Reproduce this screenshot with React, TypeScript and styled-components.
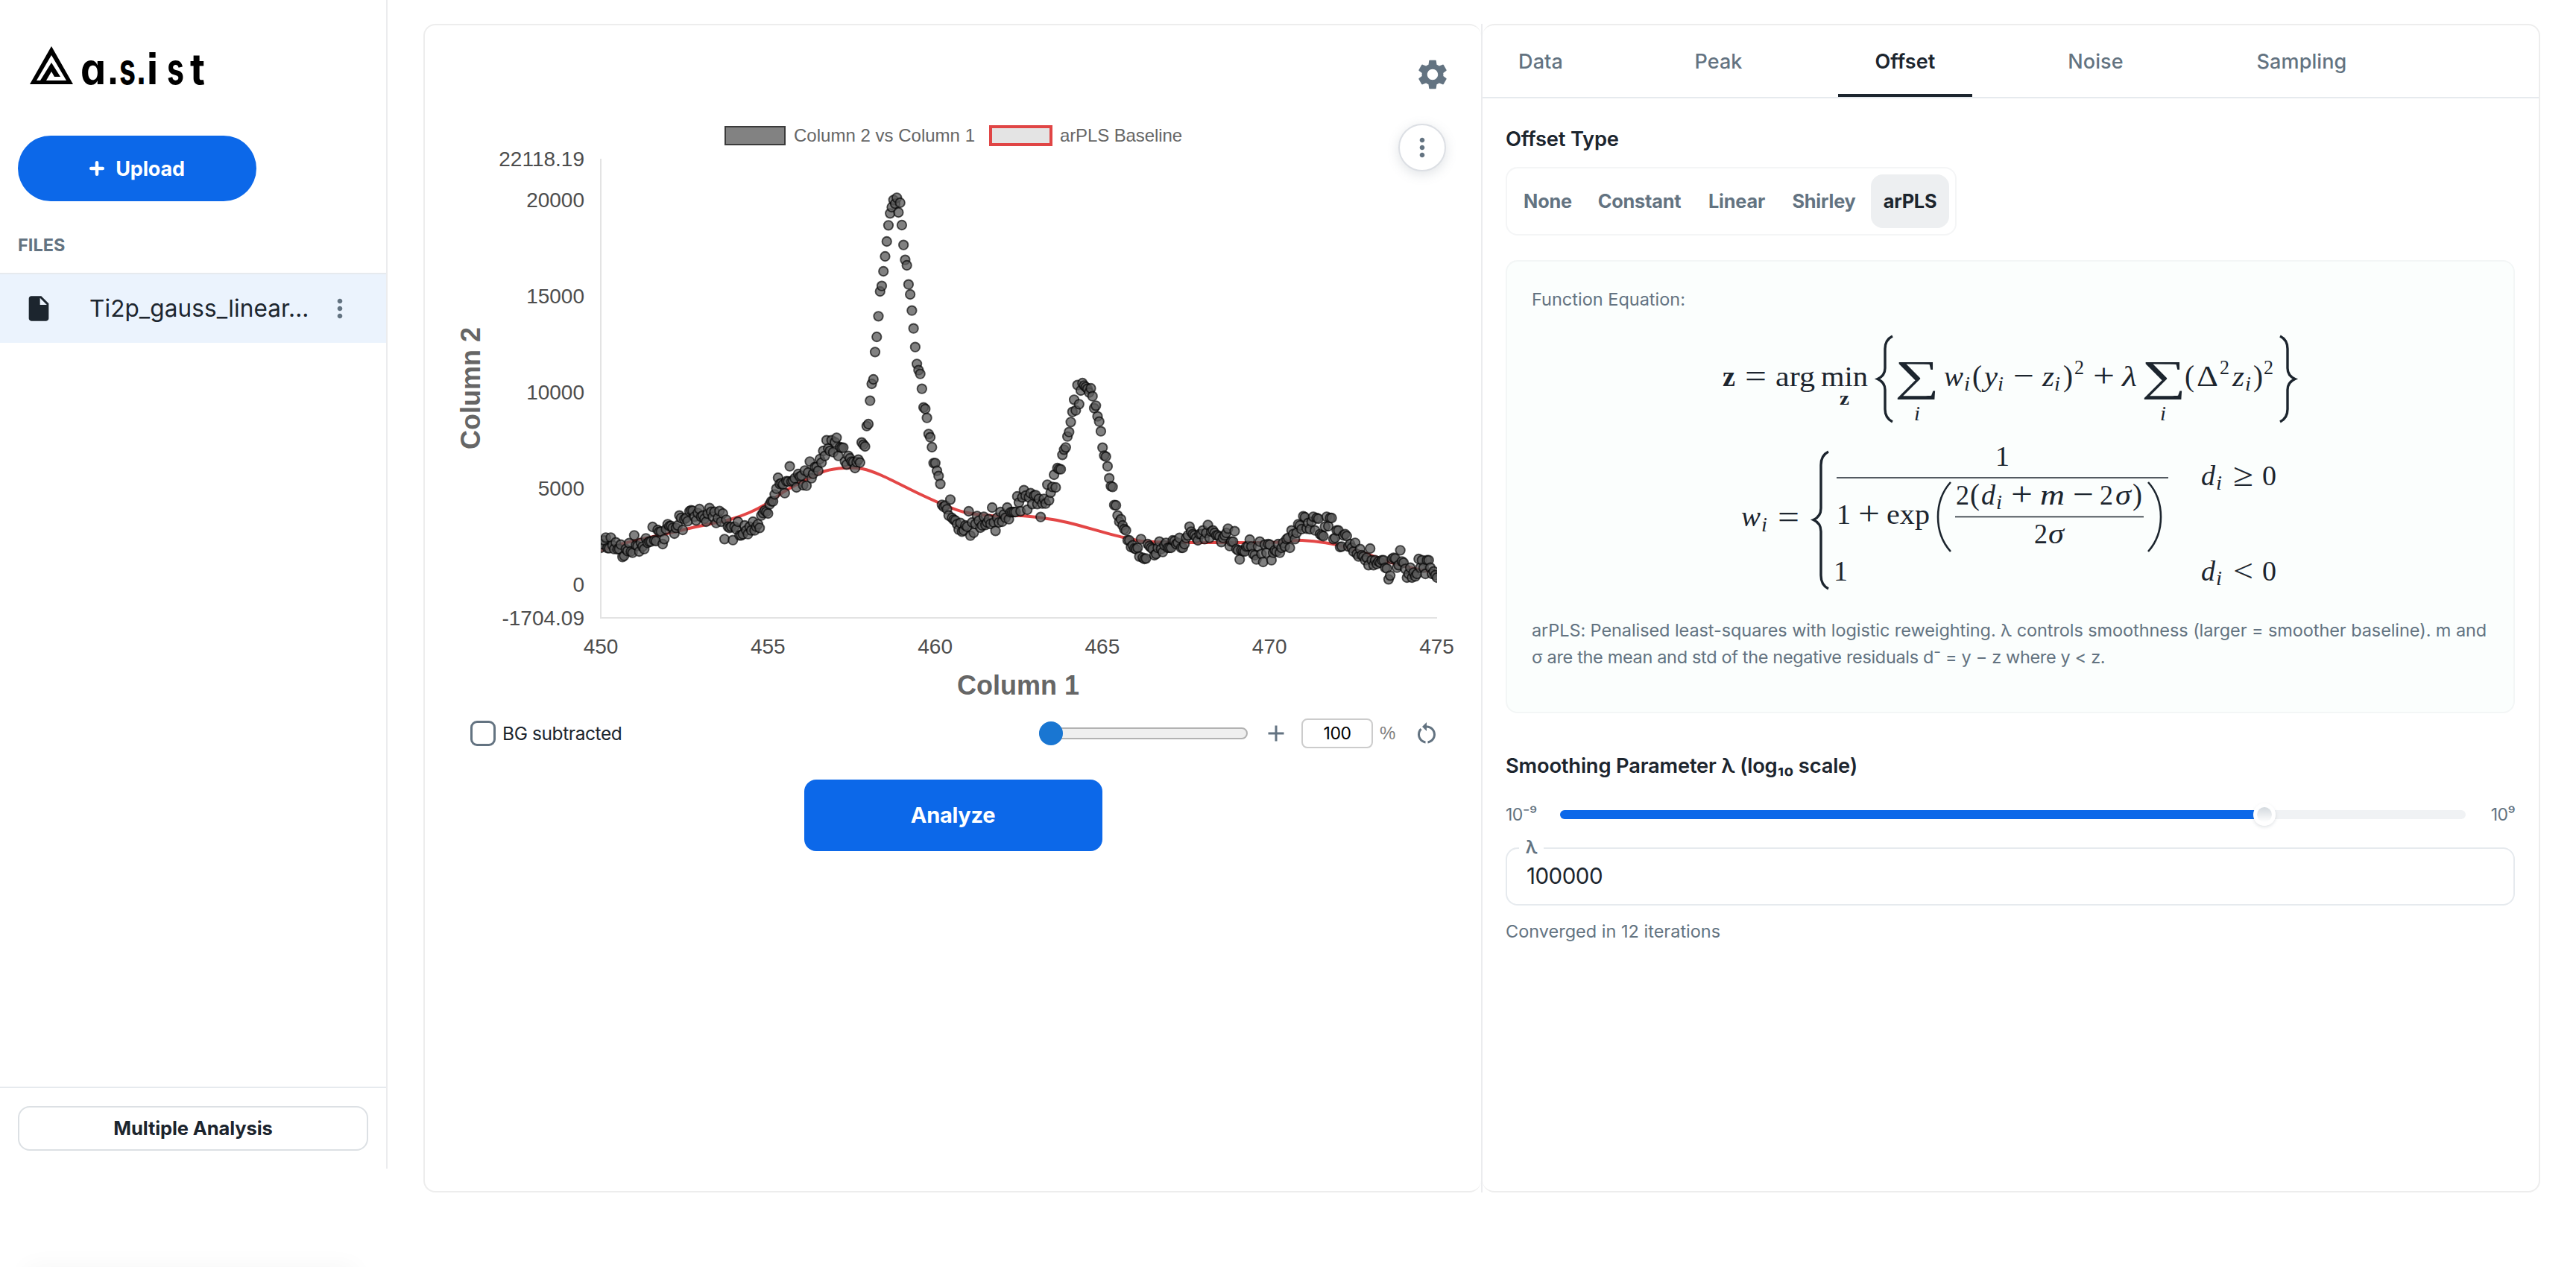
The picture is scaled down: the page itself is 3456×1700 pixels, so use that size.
import React from 'react';
import styled, { createGlobalStyle } from 'styled-components';
import { MdAdd, MdInsertDriveFile, MdMoreVert, MdRestartAlt, MdSettings } from 'react-icons/md';

const GlobalStyle = createGlobalStyle`
    * { box-sizing: border-box; }
    body {
        margin: 0;
        background: #fff;
        color: #1c252e;
        font-family: Inter, "Liberation Sans", sans-serif;
    }
    button, input { font-family: inherit; color: inherit; }
`

const Page = styled.div`
    display: flex;
    height: 1700px;
    overflow: hidden;
`
const SidebarColumn = styled.div`
    width: 520px;
    display: flex;
    flex-direction: column;
    justify-content: space-between;
`
const Sidebar = styled.aside`
    height: 1568px;
    border-right: 2px solid #ebecee;
    display: flex;
    flex-direction: column;
`
const LogoRow = styled.div`
    height: 182px;
    padding: 50px 0 0 38px;
`
const UploadButton = styled.button`
    display: flex;
    align-items: center;
    justify-content: center;
    gap: 15px;
    width: 320px;
    height: 88px;
    margin-left: 24px;
    padding: 0;
    border: none;
    border-radius: 44px;
    background: #0c68e9;
    color: #fff;
    font-size: 27px;
    font-weight: 700;
    letter-spacing: -0.2px;
`
const SidebarHeading = styled.div`
    height: 98px;
    padding: 41px 24px 0;
    border-bottom: 2px solid #e6eaee;
    color: #637381;
    font-size: 23.5px;
    font-weight: 700;
    line-height: 36px;
`
const FileRow = styled.div`
    display: flex;
    align-items: center;
    height: 92px;
    padding: 0 42px 0 32px;
    background: #ebf3fd;
`
const FileName = styled.div`
    flex: 1;
    margin-left: 48px;
    padding-bottom: 2px;
    font-size: 31.5px;
    letter-spacing: 0.1px;
    white-space: nowrap;
`
const SidebarFooter = styled.div`
    margin-top: auto;
    height: 110px;
    padding: 24px 24px 0;
    border-top: 2px solid #e6eaee;
`
const OutlineButton = styled.button`
    display: block;
    width: 100%;
    height: 60px;
    padding: 0 0 2px;
    border: 2px solid #dce0e4;
    border-radius: 16px;
    background: #fff;
    font-size: 25.5px;
    font-weight: 700;
    letter-spacing: -0.1px;
`
const HiddenCard = styled.div`
    width: 440px;
    height: 20px;
    margin: 0 0 -24px 36px;
    border-radius: 20px;
    box-shadow: 0 0 32px 4px rgba(0, 0, 0, 0.045);
`

const Main = styled.main`
    display: flex;
    width: 2840px;
    height: 1568px;
    margin: 32px 0 0 48px;
`
const Panel = styled.section<{ $side: 'left' | 'right' }>`
    flex: 1;
    min-width: 0;
    border: 2px solid #ededed;
    border-${p => (p.$side === 'left' ? 'right' : 'left')}: none;
    border-radius: 16px;
    display: flex;
    flex-direction: column;
`
const Divider = styled.div`
    width: 2px;
    background: #ebecee;
`

const PanelHeader = styled.div`
    display: flex;
    justify-content: flex-end;
    padding: 42px 41px 0 0;
    color: #637381;
`
const ChartArea = styled.div`
    position: relative;
    margin: 26px 0 0 30px;
    height: 800px;
`
const ChartMenu = styled.button`
    position: absolute;
    top: 16px;
    left: 1276px;
    display: flex;
    align-items: center;
    justify-content: center;
    width: 64px;
    height: 64px;
    padding: 0;
    border: 2px solid #dcdfe4;
    border-radius: 50%;
    background: #fff;
    color: #637381;
    box-shadow: 0 4px 16px rgba(99, 115, 129, 0.2);
`
const Controls = styled.div`
    display: flex;
    align-items: center;
    height: 40px;
    margin-top: 14px;
    padding: 0 55px 0 61px;
    color: #637381;
`
const CheckBox = styled.span`
    width: 34px;
    height: 34px;
    border: 3px solid #637381;
    border-radius: 9px;
`
const CheckLabel = styled.span`
    margin-left: 9px;
    margin-right: auto;
    color: #1c252e;
    font-size: 24.5px;
    letter-spacing: -0.4px;
`
const ZoomTrack = styled.div`
    display: flex;
    align-items: center;
    width: 280px;
    height: 16px;
    margin-right: 20px;
    border: 2px solid #b2b2b2;
    border-radius: 8px;
    background: #efefef;
`
const ZoomThumb = styled.span`
    width: 32px;
    height: 32px;
    margin-left: -2px;
    flex: none;
    border-radius: 50%;
    background: #1976d2;
`
const ZoomInput = styled.input`
    width: 96px;
    height: 40px;
    margin: 0 9px 0 16px;
    padding: 0;
    border: 2px solid #ccc;
    border-radius: 8px;
    color: #000;
    font-size: 23px;
    text-align: center;
    letter-spacing: -0.5px;
`
const Percent = styled.span`
    width: 45px;
    color: #808080;
    font-family: "Liberation Sans", sans-serif;
    font-size: 24px;
`
const AnalyzeButton = styled.button`
    width: 400px;
    height: 96px;
    margin: 42px auto 0;
    padding: 0 0 2px;
    border: none;
    border-radius: 16px;
    background: #0c68e9;
    color: #fff;
    font-size: 29px;
    font-weight: 700;
    letter-spacing: -0.3px;
`

const TabBar = styled.div`
    display: flex;
    gap: 80px;
    height: 98px;
    border-bottom: 2px solid #e6eaee;
`
const Tab = styled.div<{ $active?: boolean; $width: number }>`
    width: ${p => p.$width}px;
    line-height: 97px;
    text-align: center;
    font-size: 27px;
    letter-spacing: 0.1px;
    font-weight: ${p => (p.$active ? 600 : 500)};
    color: ${p => (p.$active ? '#1c252e' : '#637381')};
    box-shadow: ${p => (p.$active ? 'inset 0 -4px 0 #1c252e' : 'none')};
`
const PanelBody = styled.div`
    display: flex;
    flex-direction: column;
    padding: 36px 32px 0 31px;
`
const SectionTitle = styled.div<{ $top?: number }>`
    margin-top: ${p => p.$top || 0}px;
    height: 36px;
    line-height: 37px;
    font-size: 27.3px;
    font-weight: 600;
    letter-spacing: -0.18px;
`
const ToggleGroup = styled.div`
    display: flex;
    gap: 4px;
    width: 605px;
    height: 92px;
    margin-top: 20px;
    padding: 8px;
    border: 2px solid #f4f5f6;
    border-radius: 16px;
`
const Toggle = styled.button<{ $on: boolean; $width: number }>`
    width: ${p => p.$width}px;
    padding: 0 0 1px;
    border: none;
    border-radius: 16px;
    background: ${p => (p.$on ? '#edeff1' : 'transparent')};
    color: ${p => (p.$on ? '#1c252e' : '#637381')};
    font-size: 25.3px;
    font-weight: 700;
    letter-spacing: -0.2px;
`
const EquationCard = styled.div`
    height: 608px;
    margin-top: 33px;
    padding: 33px 32px 0 33px;
    border: 2px solid #f3f6f6;
    border-radius: 16px;
    background: #fbfefd;
    color: #637381;
    font-size: 23.5px;
    line-height: 36px;
`
const EquationBox = styled.div`
    display: flex;
    justify-content: center;
    margin: 20px 0 28px;
    padding-left: 4px;
`
const DescriptionLine = styled.div<{ $spacing: number }>`
    white-space: nowrap;
    letter-spacing: ${p => p.$spacing}px;
`
const SliderRow = styled.div`
    display: flex;
    align-items: center;
    height: 36px;
    margin-top: 30px;
    color: #637381;
    font-size: 23px;
    letter-spacing: -0.6px;
`
const SliderLabel = styled.span<{ $right?: boolean }>`
    width: ${p => (p.$right ? 66 : 73)}px;
    text-align: ${p => (p.$right ? 'right' : 'left')};
`
const SliderTrack = styled.div`
    display: flex;
    align-items: center;
    width: 1216px;
    height: 12px;
    border-radius: 6px;
    background: #f0f2f4;
`
const SliderFill = styled.div`
    height: 12px;
    border-radius: 6px 0 0 6px;
    background: #0c68e9;
`
const SliderThumb = styled.span`
    width: 30px;
    height: 30px;
    margin-left: -15px;
    border: 5px solid #fff;
    border-radius: 50%;
    background: linear-gradient(#d3d9de, #fff);
    box-shadow: 0 2px 4px rgba(99, 115, 129, 0.2);
`
const Field = styled.div`
    position: relative;
    height: 78px;
    margin-top: 26px;
    padding-left: 26px;
    border: 2px solid #e6eaee;
    border-radius: 16px;
    font-size: 29.5px;
    line-height: 73px;
    letter-spacing: -0.5px;
`
const FieldLabel = styled.span`
    position: absolute;
    top: -17px;
    left: 16px;
    width: 33px;
    background: #fff;
    color: #637381;
    font-size: 24px;
    font-weight: 600;
    line-height: 30px;
    text-align: center;
`
const Caption = styled.div`
    margin-top: 17px;
    color: #637381;
    font-size: 23.5px;
    line-height: 36px;
`

// detector readings, one every 0.05 eV, in thirds of a pixel from the middle of the plot
const samples = [
    525, 510, 495, 484, 526, 527, 484, 515, 530, 503, 531, 530, 512, 562, 557, 530, 538, 506, 540, 545,
    475, 515, 518, 540, 505, 520, 530, 487, 505, 500, 500, 441, 495, 498, 453, 460, 460, 510, 490, 450,
    430, 438, 437, 445, 468, 445, 435, 395, 405, 453, 410, 405, 418, 378, 374, 376, 400, 415, 385, 369,
    400, 395, 408, 420, 388, 365, 380, 400, 380, 425, 405, 377, 420, 387, 490, 412, 440, 445, 440, 494,
    440, 450, 420, 475, 475, 470, 435, 455, 470, 440, 455, 420, 455, 440, 430, 445, 395, 385, 375, 380,
    387, 350, 338, 338, 310, 287, 243, 268, 265, 270, 305, 257, 258, 197, 258, 255, 245, 282, 228, 238,
    235, 273, 214, 275, 222, 178, 245, 227, 200, 200, 215, 168, 182, 135, 155, 92, 125, 135, 92, 140,
    100, 82, 155, 120, 122, 122, 178, 190, 155, 165, 178, 180, 204, 180, 170, 182, 101, 110, 117, 35,
    27, -67, -135, -153, -263, -324, -407, -507, -529, -588, -648, -708, -773, -821, -846, -875, -860, -884, -825, -864,
    -774, -694, -634, -612, -535, -495, -430, -358, -283, -215, -190, -175, -115, -40, -34, 2, 67, 80, 120, 184,
    184, 215, 236, 268, 352, 360, 355, 370, 395, 331, 405, 412, 415, 430, 452, 425, 460, 455, 435, 440,
    378, 476, 423, 464, 429, 397, 416, 444, 435, 400, 433, 423, 410, 429, 363, 423, 457, 404, 423, 381,
    420, 391, 404, 363, 410, 382, 381, 381, 381, 318, 343, 378, 322, 293, 315, 372, 322, 305, 349, 315,
    313, 349, 328, 401, 347, 328, 347, 271, 334, 303, 280, 231, 282, 204, 208, 209, 151, 130, 121, 77,
    59, 19, -22, -71, -28, -130, -53, -108, -138, -128, -122, -115, -100, -117, -85, -37, -47, -4, 17, 56,
    122, 154, 158, 197, 245, 277, 280, 353, 354, 395, 420, 410, 435, 450, 455, 495, 495, 522, 515, 528,
    530, 525, 560, 490, 565, 570, 568, 510, 518, 525, 530, 555, 550, 525, 500, 530, 542, 515, 505, 525,
    525, 525, 495, 498, 510, 505, 485, 525, 525, 510, 485, 475, 440, 460, 470, 475, 485, 495, 470, 470,
    455, 490, 465, 433, 485, 460, 455, 465, 475, 475, 480, 502, 485, 475, 465, 448, 518, 500, 500, 458,
    530, 535, 572, 535, 538, 540, 520, 518, 492, 520, 550, 555, 572, 520, 500, 550, 582, 512, 545, 510,
    512, 575, 545, 535, 540, 510, 545, 525, 505, 520, 490, 485, 525, 455, 470, 490, 465, 430, 435, 450,
    398, 402, 448, 425, 450, 420, 400, 455, 405, 408, 470, 475, 478, 440, 400, 438, 405, 405, 490, 485,
    455, 455, 522, 520, 475, 470, 478, 520, 510, 525, 540, 505, 550, 560, 530, 555, 560, 575, 565, 595,
    528, 575, 595, 575, 590, 580, 585, 575, 575, 605, 608, 652, 637, 570, 565, 568, 605, 595, 535, 580,
    585, 610, 645, 630, 605, 645, 625, 640, 630, 570, 605, 575, 605, 630, 575, 575, 605, 630, 620, 635,
    645,
];

const baseline = [
    [0, 526], [27, 517], [84, 504], [127, 494], [161, 487], [177, 483], [201, 474], [224, 462], [247, 446],
    [277, 430], [301, 419], [327, 415], [351, 416], [377, 425], [424, 448], [457, 463], [487, 474], [525, 479],
    [565, 479], [606, 484], [634, 490], [701, 508], [741, 514], [834, 515], [901, 515], [941, 512], [987, 518],
    [1027, 530], [1061, 542], [1084, 548], [1111, 554], [1122, 557],
];

const PLOT_WIDTH = 1122;
const PLOT_HEIGHT = 616;

const smoothPath = (pts: number[][]) => {
    let d = `M${pts[0][0]} ${pts[0][1]}`;
    for (let i = 0; i < pts.length - 1; i++) {
        const p0 = pts[i - 1] || pts[i];
        const p1 = pts[i];
        const p2 = pts[i + 1];
        const p3 = pts[i + 2] || p2;
        d += `C${p1[0] + (p2[0] - p0[0]) / 6} ${p1[1] + (p2[1] - p0[1]) / 6} ${p2[0] - (p3[0] - p1[0]) / 6} ${p2[1] - (p3[1] - p1[1]) / 6} ${p2[0]} ${p2[1]}`;
    }
    return d;
}

const yTicks: [string, number][] = [
    ['22118.19', 0], ['20000', 55], ['15000', 184], ['10000', 313], ['5000', 442], ['0', 571], ['-1704.09', 616],
];

const Chart = () => (
    <svg width="1360" height="800" fontFamily="Liberation Sans, sans-serif" fill="#666">
        <rect x="373" y="20" width="80" height="24" fill="#828282" stroke="#3b3b3b" strokeWidth="2" />
        <text x="465" y="40" fontSize="24" textLength="243">Column 2 vs Column 1</text>
        <rect x="729" y="20" width="81" height="24" fill="#e4e4e4" stroke="#e04545" strokeWidth="4" />
        <text x="822" y="40" fontSize="24" textLength="164">arPLS Baseline</text>
        <clipPath id="plot"><rect width={PLOT_WIDTH} height={PLOT_HEIGHT} /></clipPath>
        <g transform="translate(206 63)">
            <path d={`M0 0V${PLOT_HEIGHT}H${PLOT_WIDTH}`} fill="none" stroke="#e3e3e3" strokeWidth="2" />
            <g clipPath="url(#plot)">
                <path d={smoothPath(baseline)} fill="none" stroke="#e34646" strokeWidth="4" />
                <g fill="rgba(90,90,90,0.76)" stroke="rgba(0,0,0,0.65)" strokeWidth="1.9">
                    {samples.map((v, i) => (
                        <circle key={i} cx={i * PLOT_WIDTH / 500} cy={347 + v / 3} r="6.2" />
                    ))}
                </g>
            </g>
            <g fontSize="28" fill="#4d4d4d">
                {yTicks.map(([label, y]) => (
                    <text key={label} x="-22" y={y + 10} textAnchor="end">{label}</text>
                ))}
                {[450, 455, 460, 465, 470, 475].map((label, i) => (
                    <text key={label} x={i * 224.3} y="664" textAnchor="middle">{label}</text>
                ))}
            </g>
        </g>
        <g fontSize="36" fontWeight="700" textAnchor="middle">
            <text x="766" y="782">Column 1</text>
            <text transform="translate(44 371) rotate(-90)">Column 2</text>
        </g>
    </svg>
);

const logoLetters: [string, number, number][] = [
    ['a', 70, 34], ['.', 106, 15], ['s', 122, 22], ['.', 145, 13], ['i', 159, 15], ['s', 186, 23], ['t', 217, 20],
];

const Logo = () => (
    <svg width="250" height="80" fill="#000">
        <path fillRule="evenodd" d="M31 12L60 63H2ZM31 24L11 58H16L31 34L43 53H35L31 46L24 58H51Z" />
        <g fontFamily="Inter, sans-serif" fontSize="57" fontWeight="700" style={{ fontFeatureSettings: '"cv11", "ss07"' }}>
            {logoLetters.map(([letter, x, width]) => (
                <text key={x} x={x} y="63" textLength={width} lengthAdjust="spacingAndGlyphs">{letter}</text>
            ))}
        </g>
    </svg>
);

const PlusIcon = () => (
    <svg width="20" height="20" stroke="currentColor" strokeWidth="4.5" strokeLinecap="round">
        <path d="M10 2.250V17.750M2.250 10H17.750" />
    </svg>
);

const Glyph = styled.text<{ $italic?: boolean; $size?: number; $bold?: boolean }>`
    font-family: "Liberation Serif", serif;
    font-size: ${p => p.$size || 38}px;
    font-style: ${p => (p.$italic ? 'italic' : 'normal')};
    font-weight: ${p => (p.$bold ? 700 : 400)};
`

// one row per symbol: text, x, baseline, width, style (r roman, i italic, b bold), size
type Symbol = [string, number, number, number, string, number?];
const symbols: Symbol[] = [
    ['z', 2311, 518, 17, 'b'], ['=', 2341, 519, 29, 'r', 44], ['arg', 2382, 518, 53, 'r'], ['min', 2443, 518, 63, 'r'],
    ['z', 2468, 543, 13, 'b', 26],
    ['∑', 2542, 524, 60, 'r', 58], ['i', 2568, 564, 8, 'i', 27],
    ['w', 2608, 518, 26, 'i'], ['i', 2635, 524, 8, 'i', 27], ['(', 2646, 518, 13, 'r', 41],
    ['y', 2662, 518, 18, 'i'], ['i', 2680, 524, 8, 'i', 27], ['−', 2701, 519, 28, 'r', 44],
    ['z', 2740, 518, 16, 'i'], ['i', 2756, 524, 8, 'i', 27], [')', 2768, 518, 13, 'r', 41], ['2', 2783, 502, 13, 'r', 27],
    ['+', 2808, 519, 29, 'r', 44], ['λ', 2847, 518, 20, 'i'],
    ['∑', 2873, 524, 60, 'r', 58], ['i', 2898, 564, 8, 'i', 27],
    ['(', 2931, 518, 13, 'r', 41], ['Δ', 2947, 518, 29, 'r', 40], ['2', 2978, 502, 13, 'r', 27],
    ['z', 2995, 518, 16, 'i'], ['i', 3012, 524, 8, 'i', 27], [')', 3023, 518, 13, 'r', 41], ['2', 3037, 502, 13, 'r', 27],

    ['w', 2336, 706, 26, 'i'], ['i', 2363, 713, 8, 'i', 27], ['=', 2385, 708, 29, 'r', 44],
    ['1', 2677, 625, 19, 'r'],
    ['1', 2464, 703, 19, 'r'], ['+', 2493, 704, 29, 'r', 44], ['exp', 2531, 703, 58, 'r'],
    ['2', 2624, 677, 18, 'r'], ['(', 2643, 677, 13, 'r', 41], ['d', 2658, 677, 19, 'i'], ['i', 2678, 683, 8, 'i', 27],
    ['+', 2698, 678, 29, 'r', 44], ['m', 2737, 677, 33, 'i'], ['−', 2781, 678, 28, 'r', 44],
    ['2', 2817, 677, 18, 'r'], ['σ', 2838, 677, 21, 'i'], [')', 2861, 677, 13, 'r', 41],
    ['2', 2729, 729, 18, 'r'], ['σ', 2748, 729, 21, 'i'],
    ['d', 2953, 651, 19, 'i'], ['i', 2973, 657, 8, 'i', 27], ['≥', 2996, 652, 27, 'r', 44], ['0', 3035, 651, 19, 'r'],
    ['1', 2460, 779, 19, 'r'],
    ['d', 2953, 779, 19, 'i'], ['i', 2973, 785, 8, 'i', 27], ['<', 2996, 780, 27, 'r', 42], ['0', 3035, 779, 19, 'r'],
];

const Equation = () => (
    <svg width="800" height="360" viewBox="2300 440 800 360" fill="#1c252e">
        {symbols.map(([text, x, y, width, style, size], i) => (
            <Glyph key={i} x={x} y={y} textLength={width} lengthAdjust="spacingAndGlyphs"
                $italic={style === 'i'} $bold={style === 'b'} $size={size}>{text}</Glyph>
        ))}
        <g fill="none" stroke="#1c252e" strokeWidth="3.4">
            <path d="M2539 451Q2529 456 2529 468V494Q2529 504 2519 508.500Q2529 513 2529 523V549Q2529 561 2539 566" />
            <path d="M3059 451Q3069 456 3069 468V494Q3069 504 3079 508.500Q3069 513 3069 523V549Q3069 561 3059 566" />
            <path d="M2453 606Q2443 611 2443 624V682Q2443 693 2433 697.500Q2443 702 2443 713V772Q2443 785 2453 790" />
        </g>
        <g fill="none" stroke="#1c252e" strokeWidth="2.600">
            <path d="M2617 647Q2600 666 2600 693.500T2617 740" />
            <path d="M2882 647Q2899 666 2899 693.500T2882 740" />
        </g>
        <path d="M2464 641H2909M2623 693.500H2876" stroke="#1c252e" strokeWidth="1.600" />
    </svg>
);

const tabs: [string, number][] = [['Data', 156], ['Peak', 161], ['Offset', 180], ['Noise', 171], ['Sampling', 222]];
const offsetTypes: [string, number][] = [['None', 93], ['Constant', 145], ['Linear', 108], ['Shirley', 118], ['arPLS', 105]];

export default class App extends React.Component<any, any> {
    constructor(props: any) {
        super(props);
        this.state = {
            tab: 'Offset',
            offsetType: 'arPLS',
            zoom: '100',
            lambdaPosition: 77.8
        }
    }

    handleOffsetTypeChange = (offsetType: string) => {
        this.setState({ offsetType });
    }

    handleZoomChange = (zoom: string) => {
        this.setState({ zoom });
    }

    render() {
        const { tab, offsetType, zoom, lambdaPosition } = this.state;
        return (
            <Page>
                <GlobalStyle />
                <SidebarColumn>
                    <Sidebar>
                        <LogoRow><Logo /></LogoRow>
                        <UploadButton><PlusIcon />Upload</UploadButton>
                        <SidebarHeading>FILES</SidebarHeading>
                        <FileRow>
                            <MdInsertDriveFile size={40} />
                            <FileName>Ti2p_gauss_linear...</FileName>
                            <MdMoreVert size={40} color="#637381" />
                        </FileRow>
                        <SidebarFooter>
                            <OutlineButton>Multiple Analysis</OutlineButton>
                        </SidebarFooter>
                    </Sidebar>
                    <HiddenCard />
                </SidebarColumn>
                <Main>
                    <Panel $side="left">
                        <PanelHeader><MdSettings size={48} /></PanelHeader>
                        <ChartArea>
                            <Chart />
                            <ChartMenu><MdMoreVert size={40} /></ChartMenu>
                        </ChartArea>
                        <Controls>
                            <CheckBox />
                            <CheckLabel>BG subtracted</CheckLabel>
                            <ZoomTrack><ZoomThumb /></ZoomTrack>
                            <MdAdd size={36} />
                            <ZoomInput value={zoom} onChange={(event: any) => this.handleZoomChange(event.target.value)} />
                            <Percent>%</Percent>
                            <MdRestartAlt size={36} />
                        </Controls>
                        <AnalyzeButton>Analyze</AnalyzeButton>
                    </Panel>
                    <Divider />
                    <Panel $side="right">
                        <TabBar>
                            {tabs.map(([name, width]) => (
                                <Tab key={name} $width={width} $active={name === tab}>{name}</Tab>
                            ))}
                        </TabBar>
                        <PanelBody>
                            <SectionTitle>Offset Type</SectionTitle>
                            <ToggleGroup>
                                {offsetTypes.map(([name, width]) => (
                                    <Toggle
                                        key={name}
                                        $width={width}
                                        $on={name === offsetType}
                                        onClick={() => this.handleOffsetTypeChange(name)}
                                    >
                                        {name}
                                    </Toggle>
                                ))}
                            </ToggleGroup>
                            <EquationCard>
                                Function Equation:
                                <EquationBox><Equation /></EquationBox>
                                <DescriptionLine $spacing={-0.08}>
                                    arPLS: Penalised least-squares with logistic reweighting. λ controls smoothness (larger = smoother baseline). m and
                                </DescriptionLine>
                                <DescriptionLine $spacing={-0.34}>
                                    σ are the mean and std of the negative residuals d⁻ = y − z where y {'<'} z.
                                </DescriptionLine>
                            </EquationCard>
                            <SectionTitle $top={52}>Smoothing Parameter λ (log₁₀ scale)</SectionTitle>
                            <SliderRow>
                                <SliderLabel>10⁻⁹</SliderLabel>
                                <SliderTrack>
                                    <SliderFill style={{ width: lambdaPosition + '%' }} />
                                    <SliderThumb />
                                </SliderTrack>
                                <SliderLabel $right>10⁹</SliderLabel>
                            </SliderRow>
                            <Field>
                                <FieldLabel>λ</FieldLabel>
                                100000
                            </Field>
                            <Caption>Converged in 12 iterations</Caption>
                        </PanelBody>
                    </Panel>
                </Main>
            </Page>
        );
    }
}
